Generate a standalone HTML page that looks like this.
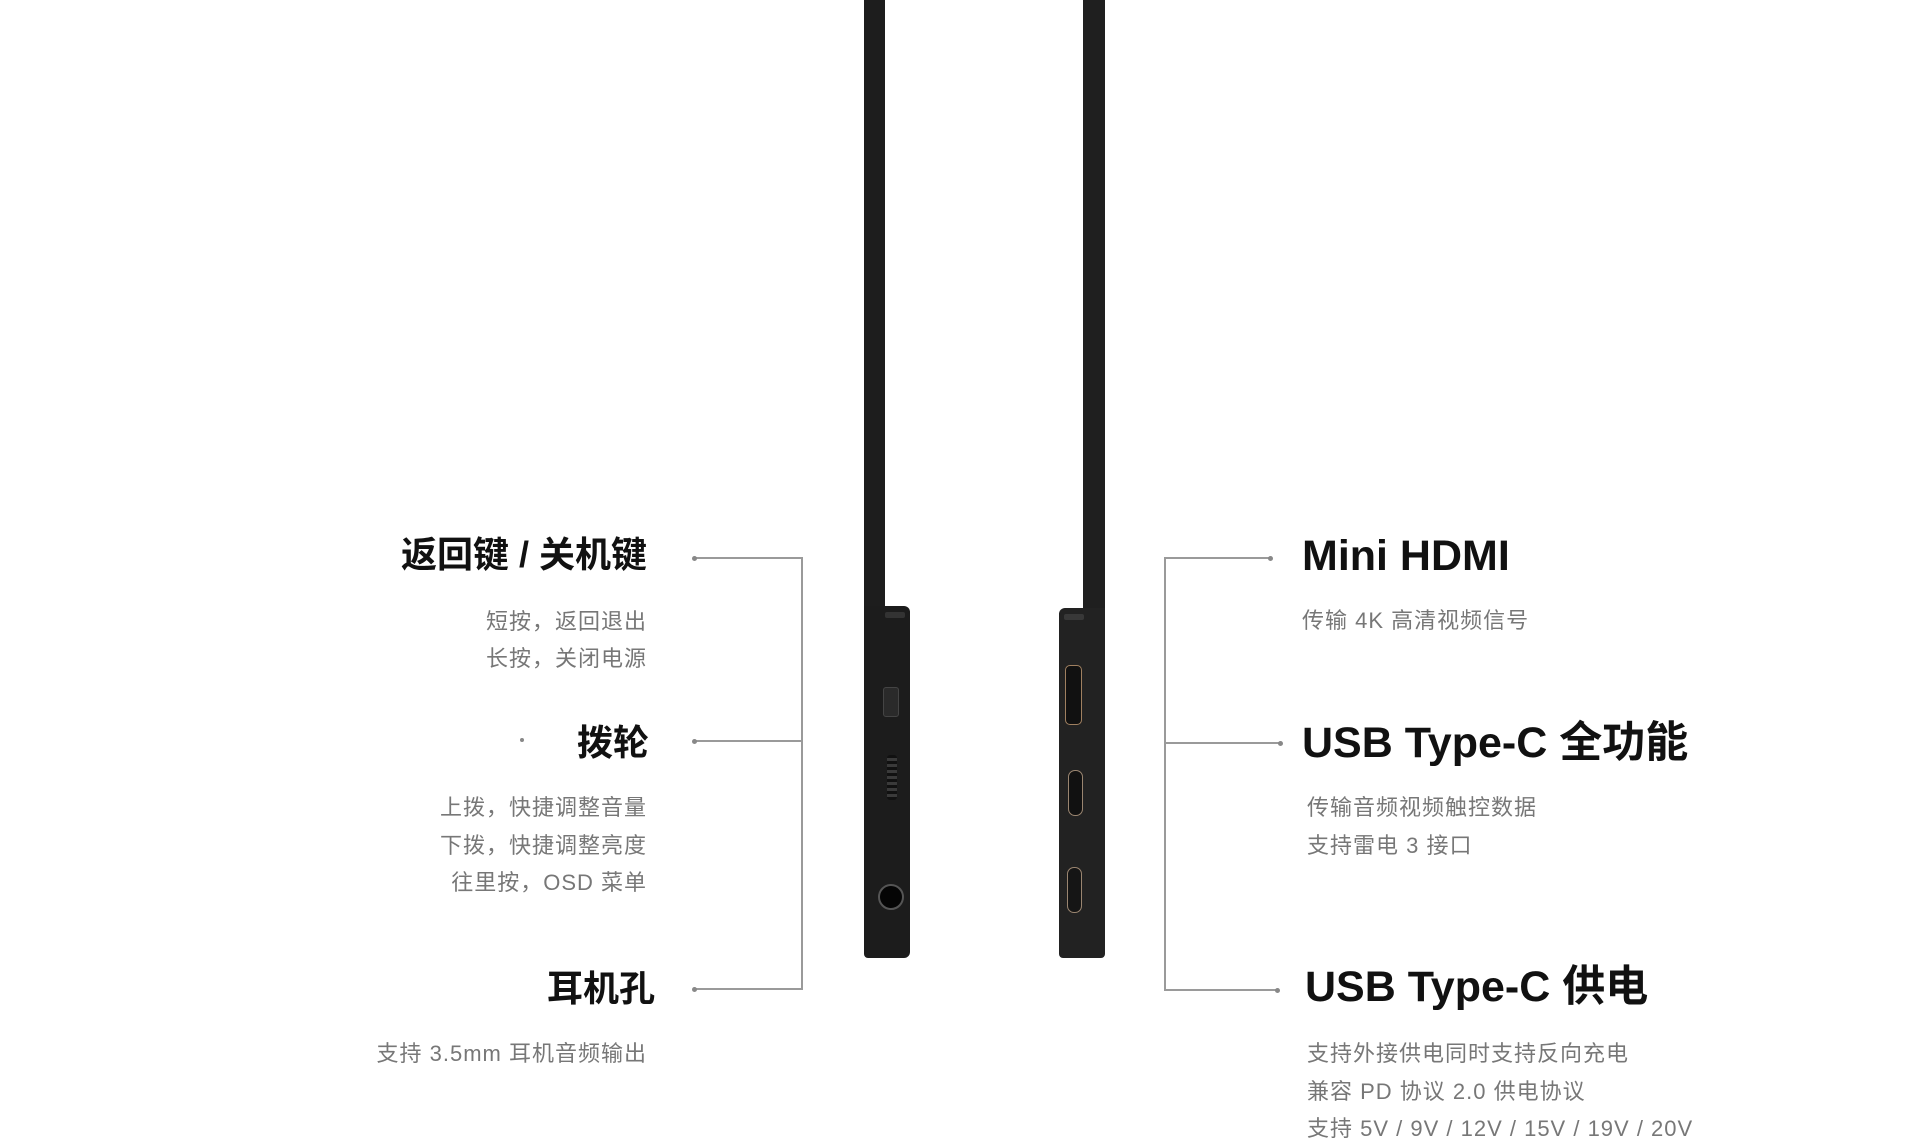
<!DOCTYPE html>
<html><head><meta charset="utf-8"><style>
html,body{margin:0;padding:0;background:#fff;}
body{width:1920px;height:1124px;position:relative;overflow:hidden;font-family:"Liberation Sans","Noto Sans CJK SC",sans-serif;}
.t{position:absolute;white-space:nowrap;font-weight:bold;color:#111;line-height:1;}
.s{position:absolute;white-space:nowrap;color:#777;font-size:22px;letter-spacing:1px;line-height:1;}
.r{text-align:right;}
.ln{position:absolute;background:#9a9a9a;}
.dot{position:absolute;width:5px;height:5px;border-radius:50%;background:#888;}
</style></head><body>

<!-- left device -->
<div style="position:absolute;left:864px;top:0;width:21px;height:620px;background:#1d1d1d;"></div>
<div style="position:absolute;left:864px;top:606px;width:46px;height:352px;background:#1c1c1c;border-radius:0 6px 6px 4px;"></div>
<div style="position:absolute;left:885px;top:612px;width:20px;height:6px;background:#333;border-radius:2px;"></div>
<div style="position:absolute;left:883px;top:687px;width:14px;height:28px;background:#2a2a2a;border:1px solid #444;border-radius:3px;"></div>
<div style="position:absolute;left:887px;top:755px;width:10px;height:45px;background:repeating-linear-gradient(#111 0 3px,#3a3a3a 3px 6px);border-radius:3px;"></div>
<div style="position:absolute;left:878px;top:884px;width:22px;height:22px;border-radius:50%;background:#050505;border:2px solid #555;"></div>

<!-- right device -->
<div style="position:absolute;left:1083px;top:0;width:22px;height:620px;background:#1f1f1f;"></div>
<div style="position:absolute;left:1059px;top:608px;width:46px;height:350px;background:#222;border-radius:6px 0 4px 4px;"></div>
<div style="position:absolute;left:1064px;top:614px;width:20px;height:6px;background:#383838;border-radius:2px;"></div>
<div style="position:absolute;left:1065px;top:665px;width:15px;height:58px;border:1.5px solid #a08060;border-radius:5px;background:#111;"></div>
<div style="position:absolute;left:1068px;top:770px;width:13px;height:44px;border:1.5px solid #9a8570;border-radius:7px;background:#111;"></div>
<div style="position:absolute;left:1067px;top:867px;width:13px;height:44px;border:1.5px solid #9a8570;border-radius:7px;background:#151515;"></div>

<!-- left bracket -->
<div class="ln" style="left:694px;top:557px;width:108px;height:2px;"></div>
<div class="ln" style="left:694px;top:740px;width:108px;height:2px;"></div>
<div class="ln" style="left:694px;top:988px;width:108px;height:2px;"></div>
<div class="ln" style="left:801px;top:557px;width:2px;height:433px;"></div>
<div class="dot" style="left:692px;top:556px;"></div>
<div class="dot" style="left:692px;top:739px;"></div>
<div class="dot" style="left:692px;top:987px;"></div>
<div class="dot" style="left:520px;top:738px;width:4px;height:4px;"></div>

<!-- right bracket -->
<div class="ln" style="left:1164px;top:557px;width:106px;height:2px;"></div>
<div class="ln" style="left:1164px;top:742px;width:116px;height:2px;"></div>
<div class="ln" style="left:1164px;top:989px;width:113px;height:2px;"></div>
<div class="ln" style="left:1164px;top:557px;width:2px;height:434px;"></div>
<div class="dot" style="left:1268px;top:556px;"></div>
<div class="dot" style="left:1278px;top:741px;"></div>
<div class="dot" style="left:1275px;top:988px;"></div>

<!-- left texts -->
<div class="t r" style="right:1273px;top:537px;font-size:36px;">返回键 / 关机键</div>
<div class="s r" style="right:1273px;top:611px;">短按，返回退出</div>
<div class="s r" style="right:1273px;top:648px;">长按，关闭电源</div>
<div class="t r" style="right:1271px;top:725px;font-size:36px;">拨轮</div>
<div class="s r" style="right:1273px;top:797px;">上拨，快捷调整音量</div>
<div class="s r" style="right:1273px;top:835px;">下拨，快捷调整亮度</div>
<div class="s r" style="right:1273px;top:872px;">往里按，OSD 菜单</div>
<div class="t r" style="right:1265px;top:971px;font-size:36px;">耳机孔</div>
<div class="s r" style="right:1273px;top:1043px;">支持 3.5mm 耳机音频输出</div>

<!-- right texts -->
<div class="t" style="left:1302px;top:535px;font-size:43px;">Mini HDMI</div>
<div class="s" style="left:1302px;top:610px;">传输 4K 高清视频信号</div>
<div class="t" style="left:1302px;top:722px;font-size:43px;">USB Type‑C 全功能</div>
<div class="s" style="left:1307px;top:797px;">传输音频视频触控数据</div>
<div class="s" style="left:1307px;top:835px;">支持雷电 3 接口</div>
<div class="t" style="left:1305px;top:966px;font-size:43px;">USB Type‑C 供电</div>
<div class="s" style="left:1307px;top:1043px;">支持外接供电同时支持反向充电</div>
<div class="s" style="left:1307px;top:1081px;">兼容 PD 协议 2.0 供电协议</div>
<div class="s" style="left:1307px;top:1118px;">支持 5V / 9V / 12V / 15V / 19V / 20V</div>

</body></html>
